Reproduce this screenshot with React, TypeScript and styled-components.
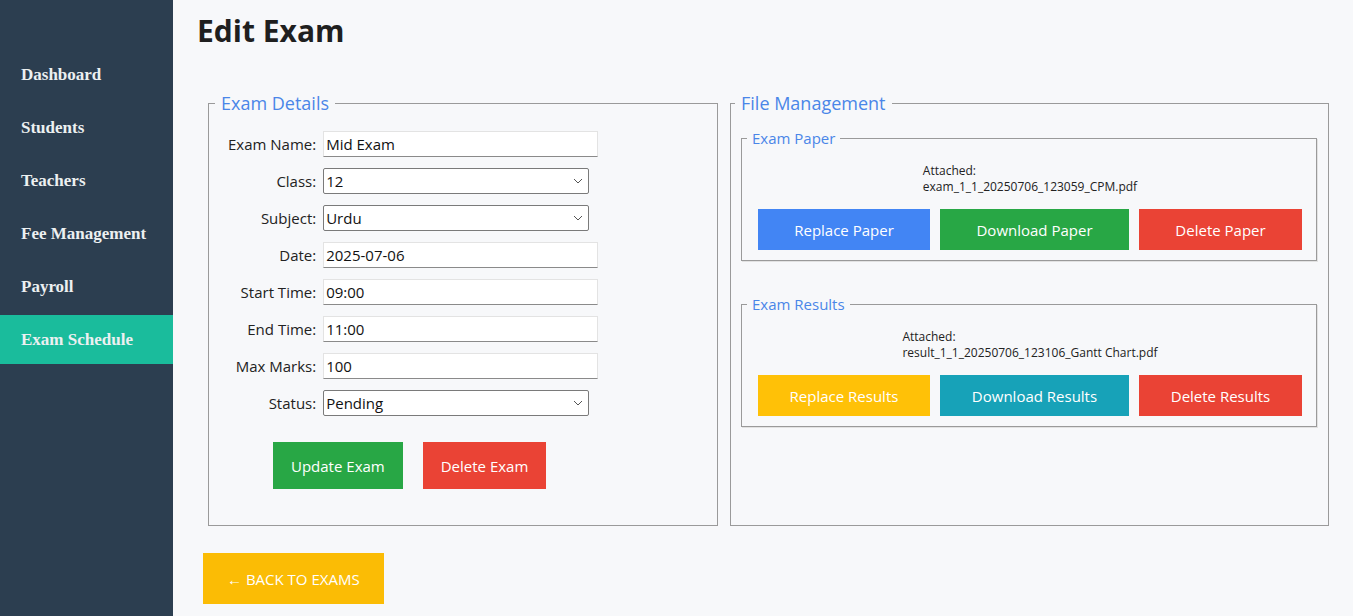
import React from "react";
import styled, { createGlobalStyle } from "styled-components";

const GlobalStyle = createGlobalStyle`
  html, body { margin: 0; padding: 0; }
  body {
    background: #f7f8fa;
    font-family: "Open Sans", "Noto Sans", sans-serif;
    color: #222;
  }
  * { box-sizing: border-box; }
`;

const Shell = styled.div`
  display: flex;
  min-height: 100vh;
`;

const Sidebar = styled.nav`
  width: 173px;
  flex-shrink: 0;
  background: #2c3e50;
  padding-top: 50px;
  display: flex;
  flex-direction: column;
  gap: 4px;
`;

const NavItem = styled.div<{ $active?: boolean }>`
  height: 49px;
  display: flex;
  align-items: center;
  padding-left: 21px;
  background: ${(p) => (p.$active ? "#1abc9c" : "transparent")};
  color: #ecf0f1;
  font-family: "Liberation Serif", "Times New Roman", serif;
  font-weight: bold;
  font-size: 17px;
`;

const Main = styled.main`
  flex: 1;
  padding: 11px 24px 0 24px;
`;

const Title = styled.h1`
  margin: 0;
  font-size: 30px;
  line-height: 40px;
  font-weight: 700;
  color: #1f1f1f;
`;

const PanelRow = styled.div`
  display: grid;
  grid-template-columns: 510px 1fr;
  gap: 12px;
  margin: 40px 0 0 11px;
`;

const Panel = styled.fieldset<{ $pad: string }>`
  margin: 0;
  min-width: 0;
  border: 1px solid #9a9a9a;
  padding: ${(p) => p.$pad};
`;

const PanelLegend = styled.legend<{ $shift: number }>`
  font-size: 18px;
  line-height: 24px;
  color: #4a86e8;
  padding: 0 6px;
  margin-left: ${(p) => p.$shift}px;
`;

const FormGrid = styled.div`
  display: grid;
  grid-template-columns: auto auto;
  justify-content: start;
  column-gap: 7px;
  row-gap: 11px;
  align-items: center;
`;

const Label = styled.label`
  font-size: 15px;
  text-align: right;
  color: #222;
`;

const Entry = styled.input`
  width: 275px;
  height: 26px;
  border: 1px solid #e3e3e3;
  border-bottom-color: #8a8a8a;
  background: #fff;
  font-family: inherit;
  font-size: 15px;
  color: #111;
  padding: 0 2px;
  outline: none;
`;

const SelectWrap = styled.div`
  position: relative;
  width: 266px;
  height: 26px;
`;

const Select = styled.select`
  appearance: none;
  width: 100%;
  height: 100%;
  border: 1px solid #7a7a7a;
  border-radius: 2px;
  background: #fff;
  font-family: inherit;
  font-size: 15px;
  color: #111;
  padding: 0 2px;
  outline: none;
`;

const Chevron = styled.svg`
  position: absolute;
  right: 6px;
  top: 10px;
  pointer-events: none;
`;

const ButtonRow = styled.div`
  display: flex;
  gap: 20px;
  margin: 26px 0 0 45px;
`;

const ActionButton = styled.button<{ $bg: string; $h: number }>`
  height: ${(p) => p.$h}px;
  padding: 0 18px;
  border: none;
  border-radius: 0;
  background: ${(p) => p.$bg};
  color: #fff;
  font-family: inherit;
  font-size: 15px;
  cursor: pointer;
`;

const SubStack = styled.div`
  display: flex;
  flex-direction: column;
  gap: 33px;
`;

const SubPanel = styled.fieldset`
  margin: 0;
  min-width: 0;
  border: 1px solid #9a9a9a;
  box-shadow: 1px 1px 0 #e2e2e2;
  padding: 15px 14px 10px 16px;
`;

const SubLegend = styled.legend`
  font-size: 15px;
  line-height: 20px;
  color: #4a86e8;
  padding: 0 5px;
  margin-left: -11px;
`;

const Attached = styled.div`
  display: flex;
  justify-content: center;
`;

const AttachedText = styled.div`
  font-size: 12px;
  line-height: 16px;
  color: #222;
  text-align: left;
`;

const FileButtons = styled.div`
  display: grid;
  grid-template-columns: 172fr 189fr 163fr;
  gap: 10px;
  margin-top: 14px;
`;

const FileButton = styled.button<{ $bg: string }>`
  height: 41px;
  border: none;
  border-radius: 0;
  background: ${(p) => p.$bg};
  color: #fff;
  font-family: inherit;
  font-size: 15px;
  cursor: pointer;
`;

const BackButton = styled.button`
  margin: 27px 0 0 6px;
  height: 51px;
  padding: 0 24px;
  border: none;
  background: #fbbc05;
  color: #fff;
  font-family: inherit;
  font-size: 15px;
  cursor: pointer;
`;

const navItems = [
  "Dashboard",
  "Students",
  "Teachers",
  "Fee Management",
  "Payroll",
  "Exam Schedule",
];

const ChevronIcon = () => (
  <Chevron width="10" height="6" viewBox="0 0 10 6">
    <path d="M1 1 L5 5 L9 1" fill="none" stroke="#555" strokeWidth="1" />
  </Chevron>
);

type Field =
  | { label: string; kind: "entry"; value: string }
  | { label: string; kind: "select"; value: string };

const fields: Field[] = [
  { label: "Exam Name:", kind: "entry", value: "Mid Exam" },
  { label: "Class:", kind: "select", value: "12" },
  { label: "Subject:", kind: "select", value: "Urdu" },
  { label: "Date:", kind: "entry", value: "2025-07-06" },
  { label: "Start Time:", kind: "entry", value: "09:00" },
  { label: "End Time:", kind: "entry", value: "11:00" },
  { label: "Max Marks:", kind: "entry", value: "100" },
  { label: "Status:", kind: "select", value: "Pending" },
];

const FileSection = ({
  title,
  file,
  buttons,
}: {
  title: string;
  file: string;
  buttons: { text: string; bg: string }[];
}) => (
  <SubPanel>
    <SubLegend>{title}</SubLegend>
    <Attached>
      <AttachedText>
        Attached:
        <br />
        {file}
      </AttachedText>
    </Attached>
    <FileButtons>
      {buttons.map((b) => (
        <FileButton key={b.text} $bg={b.bg}>
          {b.text}
        </FileButton>
      ))}
    </FileButtons>
  </SubPanel>
);

export default function App() {
  return (
    <>
      <GlobalStyle />
      <Shell>
        <Sidebar>
          {navItems.map((n) => (
            <NavItem key={n} $active={n === "Exam Schedule"}>
              {n}
            </NavItem>
          ))}
        </Sidebar>
        <Main>
          <Title>Edit Exam</Title>
          <PanelRow>
            <Panel $pad="16px 0 36px 19px">
              <PanelLegend $shift={-13}>Exam Details</PanelLegend>
              <FormGrid>
                {fields.map((f) => (
                  <React.Fragment key={f.label}>
                    <Label>{f.label}</Label>
                    {f.kind === "entry" ? (
                      <Entry defaultValue={f.value} />
                    ) : (
                      <SelectWrap>
                        <Select defaultValue={f.value}>
                          <option>{f.value}</option>
                        </Select>
                        <ChevronIcon />
                      </SelectWrap>
                    )}
                  </React.Fragment>
                ))}
              </FormGrid>
              <ButtonRow>
                <ActionButton $bg="#28a745" $h={47}>
                  Update Exam
                </ActionButton>
                <ActionButton $bg="#ea4335" $h={47}>
                  Delete Exam
                </ActionButton>
              </ButtonRow>
            </Panel>
            <Panel $pad="13px 11px 0 10px">
              <PanelLegend $shift={-6}>File Management</PanelLegend>
              <SubStack>
                <FileSection
                  title="Exam Paper"
                  file="exam_1_1_20250706_123059_CPM.pdf"
                  buttons={[
                    { text: "Replace Paper", bg: "#4285f4" },
                    { text: "Download Paper", bg: "#28a745" },
                    { text: "Delete Paper", bg: "#ea4335" },
                  ]}
                />
                <FileSection
                  title="Exam Results"
                  file="result_1_1_20250706_123106_Gantt Chart.pdf"
                  buttons={[
                    { text: "Replace Results", bg: "#ffc107" },
                    { text: "Download Results", bg: "#17a2b8" },
                    { text: "Delete Results", bg: "#ea4335" },
                  ]}
                />
              </SubStack>
            </Panel>
          </PanelRow>
          <BackButton>← BACK TO EXAMS</BackButton>
        </Main>
      </Shell>
    </>
  );
}
